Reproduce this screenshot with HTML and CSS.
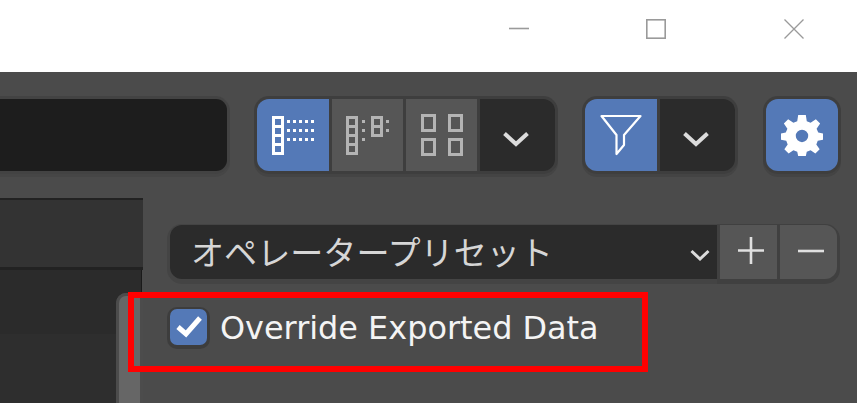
FILE: index.html
```html
<!DOCTYPE html>
<html lang="ja">
<head>
<meta charset="utf-8">
<title>Operator Presets</title>
<link rel="stylesheet" href="styles.css">
</head>
<body>
<header class="titlebar">
  <svg class="win" width="20" height="20" viewBox="0 0 20 20"><path d="M0 9.500H20" stroke="#9a9a9a" stroke-width="1.600" fill="none"/></svg>
  <svg class="win" width="20" height="20" viewBox="0 0 20 20"><rect x="0.800" y="0.800" width="18.400" height="18.400" stroke="#9a9a9a" stroke-width="1.600" fill="none"/></svg>
  <svg class="win win-close" width="20" height="20" viewBox="0 0 20 20"><path d="M0.500 0.500L19.500 19.500M19.500 0.500L0.500 19.500" stroke="#9a9a9a" stroke-width="1.300" fill="none"/></svg>
</header>
<section class="toolbar">
  <div class="search-ring"><div class="search"></div></div>
  <div class="group g-view">
    <button class="btn blue w72"><svg width="42" height="39" viewBox="0 0 42 39"><use href="#ico-list"/></svg></button>
    <button class="btn gray w71"><svg width="43" height="39" viewBox="0 0 43 39"><use href="#ico-thumb"/></svg></button>
    <button class="btn gray w71"><svg width="42" height="42" viewBox="0 0 42 42"><rect x="1.500" y="1.500" width="12" height="15" class="sq"/><rect x="28.500" y="1.500" width="12" height="15" class="sq"/><rect x="1.500" y="25.500" width="12" height="15" class="sq"/><rect x="28.500" y="25.500" width="12" height="15" class="sq"/></svg></button>
    <button class="btn dark w75"><svg class="chev" width="26" height="16" viewBox="0 0 26 16"><path d="M1.500 2.500L13 13L24.500 2.500"/></svg></button>
  </div>
  <div class="group g-filter">
    <button class="btn blue w72"><svg width="42" height="42" viewBox="0 0 42 42"><path d="M1.500 2H40.500L24 21V31L16.500 40V21Z" fill="none" stroke="#fff" stroke-width="2.200" stroke-linejoin="round"/></svg></button>
    <button class="btn dark w75"><svg class="chev" width="26" height="16" viewBox="0 0 26 16"><path d="M1.500 2.500L13 13L24.500 2.500"/></svg></button>
  </div>
  <div class="group g-gear">
    <button class="btn blue w72"><svg width="42" height="42" viewBox="0 0 44 44"><path fill="#fff" fill-rule="evenodd" d="M18 1H26L27 7.500L31 9.200L36.500 5.500L41 10L37.300 15.500L39 19.500L44 20.500V27L38.500 28L37 32L40.500 37L36 41.500L31 38L27 39.500L26 44H18L17 39.500L13 38L8 41.500L3.500 37L7 32L5.500 28L0 27V20.500L5 19.500L6.700 15.500L3 10L7.500 5.500L13 9.200L17 7.500ZM22 16.500A6.500 6.500 0 1 0 22 29.500A6.500 6.500 0 1 0 22 16.500Z"/></svg></button>
  </div>
</section>
<section class="content">
  <aside class="side">
    <div class="side-head"></div>
    <div class="side-well"><div class="side-low"></div></div>
    <div class="grip"></div>
  </aside>
  <div class="panel">
    <div class="preset-row">
      <div class="preset"><span class="preset-label">オペレータープリセット</span><svg class="chev small" width="20" height="13" viewBox="0 0 20 13"><path d="M1.500 2L10 10L18.500 2"/></svg></div>
      <button class="btn gray pm"><svg class="ico-plus" width="26" height="27" viewBox="0 0 26 27"><path d="M0 13.500H26M13 0V27" stroke="#e0e0e0" stroke-width="2.600" fill="none"/></svg></button>
      <button class="btn gray pm last"><svg class="ico-minus" width="26" height="4" viewBox="0 0 26 4"><path d="M0 2H26" stroke="#e0e0e0" stroke-width="2.600" fill="none"/></svg></button>
    </div>
    <div class="check-row">
      <span class="checkbox"><svg width="28" height="24" viewBox="0 0 28 24"><path d="M3 12L11 19L25 3" fill="none" stroke="#fff" stroke-width="5"/></svg></span>
      <span class="check-label">Override Exported Data</span>
    </div>
  </div>
</section>
<div class="highlight"></div>
<svg class="defs" width="0" height="0">
  <defs>
    <g id="ico-list" fill="#fff">
      <path fill-rule="evenodd" d="M0 0H12V39H0ZM3 3V9H9V3ZM3 12V18H9V12ZM3 21V27H9V21ZM3 30V36H9V30Z"/>
      <g id="dots"><rect x="15" y="4" width="3" height="3"/><rect x="21" y="4" width="3" height="3"/><rect x="27" y="4" width="3" height="3"/><rect x="33" y="4" width="3" height="3"/><rect x="39" y="4" width="3" height="3"/></g>
      <use href="#dots" y="9"/><use href="#dots" y="18"/>
    </g>
    <g id="ico-thumb" fill="#b4b4b4">
      <path fill-rule="evenodd" d="M0 0H12V39H0ZM3 3V9H9V3ZM3 12V18H9V12ZM3 21V27H9V21ZM3 30V36H9V30Z"/>
      <rect x="16" y="4" width="3" height="3"/><rect x="16" y="13" width="3" height="3"/><rect x="16" y="22" width="3" height="3"/>
      <path fill-rule="evenodd" d="M25 0H37V21H25ZM28 3V9H34V3ZM28 12V18H34V12Z"/>
      <rect x="40" y="4" width="3" height="3"/><rect x="40" y="13" width="3" height="3"/>
    </g>
  </defs>
</svg>
</body>
</html>
```
FILE: styles.css
```css
* { box-sizing: border-box; }
html, body { margin: 0; height: 100%; }
body {
  width: 857px; height: 403px; overflow: hidden; position: relative;
  background: #4b4b4b;
  font-family: "DejaVu Sans", "Noto Sans CJK JP", sans-serif;
}
.titlebar { height: 72px; background: #fff; display: flex; align-items: center; padding: 0 53px 0 509px; gap: 117px; }
.win { display: block; margin-top: -14px; }
.win-close { margin-left: 1px; }
.defs { position: absolute; }

.toolbar { display: flex; height: 126px; padding-top: 24px; align-items: flex-start; }
.search-ring { width: 230px; height: 78px; padding: 3px 3px 3px 0; background: #434343; border-radius: 0 15px 15px 0; box-shadow: 0 3px 0 #464646; }
.search { height: 72px; background: #1d1d1d; border-radius: 0 11px 11px 0; }
.group { display: flex; gap: 3px; height: 78px; padding: 3px; background: #3e3e3e; border-radius: 15px; box-shadow: 0 3px 0 #444; }
.g-view { margin-left: 24px; }
.g-filter { margin-left: 24px; }
.g-gear { margin-left: 25px; }
.btn { border: 0; padding: 0; margin: 0; display: flex; align-items: center; justify-content: center; height: 72px; }
.w72 { width: 72px; } .w71 { width: 71px; } .w75 { width: 75px; }
.group .btn:first-child { border-radius: 12px 0 0 12px; }
.group .btn:last-child { border-radius: 0 12px 12px 0; }
.g-gear .btn.blue:first-child { border-radius: 12px; }
.blue { background: #5479b7; }
.gray { background: #565656; }
.dark { background: #2b2b2b; }
.chev { fill: none; stroke: #dcdcdc; stroke-width: 4; margin: 8px 3px 0 0; }
.chev.small { stroke-width: 3; margin: 6px 0 0 0; }
.sq { fill: none; stroke: #b4b4b4; stroke-width: 3; }
.g-gear svg { display: block; }

.content { display: flex; height: 205px; }
.side { width: 142px; position: relative; background: #2b2b2b; border-right: 1px solid #1a1a1a; }
.side-head { height: 72px; background: #333; border-top: 2px solid #222; border-bottom: 3px solid #222; margin-right: -2px; }
.side-well { height: 133px; padding-top: 64px; }
.side-low { height: 69px; background: #2e2e2e; }
.grip { position: absolute; left: 116px; top: 95px; width: 25px; height: 110px; background: linear-gradient(90deg, #4a4a4a 0 21px, #2e2e2e 21px, #474747 25px); border-radius: 10px 0 0 0; }
.grip::before { content: ""; display: block; width: 21px; height: 110px; background: #666; border: solid #4c4c4c; border-width: 3px 3px 0 3px; border-radius: 10px 0 0 0; }

.panel { flex: 1; padding: 27px 20px 0 28px; }
.preset-row { display: flex; height: 57px; align-items: flex-start; }
.preset { width: 547px; height: 54px; background: #2b2b2b; border-radius: 12px 0 0 12px; display: flex; align-items: center; justify-content: space-between; padding: 0 7px 0 21px; box-shadow: 0 2px 0 3px #444; }
.preset-label { font-family: "Noto Sans CJK JP", sans-serif; font-size: 33.100px; color: #d6d6d6; margin-top: -3px; }
.pm { width: 57px; height: 54px; margin-left: 3px; box-shadow: 0 2px 0 3px #404040; padding: 0 0 3px 5px; }
.pm.last { border-radius: 0 12px 12px 0; }
.check-row { display: flex; align-items: center; gap: 13px; margin-top: 27px; height: 36px; }
.checkbox { width: 37px; height: 36px; background: #5479b7; border-radius: 7px; box-shadow: 0 1px 0 3px #3d3d3d; display: flex; align-items: center; justify-content: center; }
.check-label { font-size: 31.900px; color: #f4f4f4; white-space: nowrap; padding-top: 2px; }
.highlight { position: absolute; left: 128px; top: 292px; width: 520px; height: 80px; border: 6px solid #f00; }
```
